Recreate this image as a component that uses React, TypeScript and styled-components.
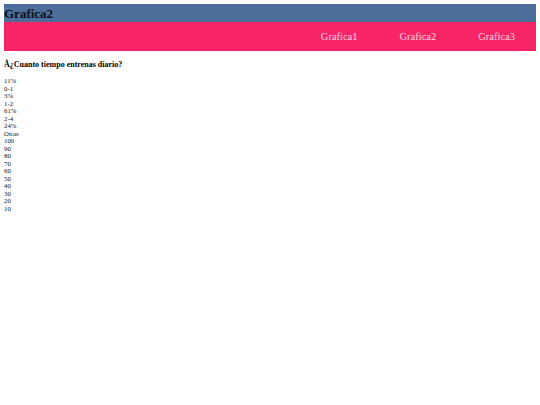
import React from "react";
import styled, { createGlobalStyle } from "styled-components";

const Global = createGlobalStyle`
  html, body { margin: 0; padding: 0; background: #ffffff; }
  body { margin: 4px; font-family: "Liberation Serif", "Times New Roman", serif; color: #000; }
`;

const TitleBar = styled.header`
  background: #4d6d9a;
  height: 18px;
  display: flex;
  align-items: center;
`;

const Title = styled.h1`
  margin: 0;
  font-size: 13px;
  font-weight: bold;
  color: #0b1020;
  line-height: 1;
`;

const Nav = styled.nav`
  background: #f72566;
  height: 29px;
  display: flex;
  justify-content: flex-end;
  align-items: center;
`;

const NavLink = styled.a`
  color: #fbd3e0;
  font-size: 10.5px;
  padding: 0 21px;
  text-decoration: none;
`;

const Question = styled.h3`
  margin: 9px 0 8px;
  font-size: 8px;
  font-weight: bold;
`;

const Label = styled.div`
  font-size: 6.8px;
  line-height: 7.5px;
  color: #111;
`;

const labels = [
  "11%", "0-1", "3%", "1-2", "61%", "2-4", "24%", "Otras",
  "100", "90", "80", "70", "60", "50", "40", "30", "20", "10",
];

export default function App() {
  return (
    <>
      <Global />
      <TitleBar>
        <Title>Grafica2</Title>
      </TitleBar>
      <Nav>
        <NavLink>Grafica1</NavLink>
        <NavLink>Grafica2</NavLink>
        <NavLink>Grafica3</NavLink>
      </Nav>
      <Question>Â¿Cuanto tiempo entrenas diario?</Question>
      {labels.map((l) => (
        <Label key={l}>{l}</Label>
      ))}
    </>
  );
}
